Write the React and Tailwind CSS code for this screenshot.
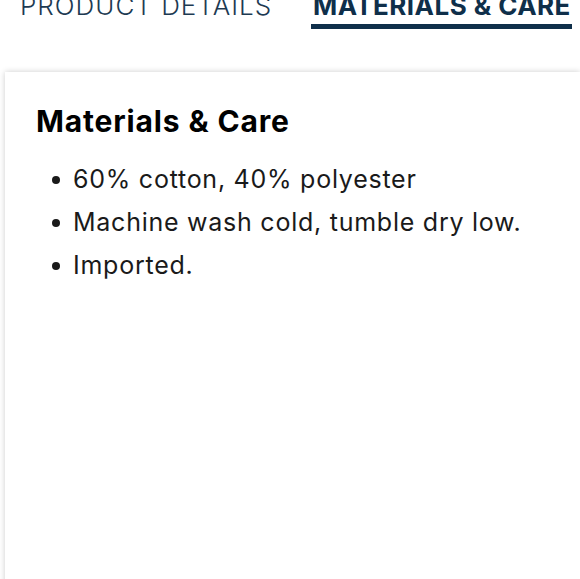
const items = ['60% cotton, 40% polyester', 'Machine wash cold, tumble dry low.', 'Imported.'];

export default function App() {
  return (
    <div className="h-[579px] w-[580px] overflow-hidden bg-white font-['Inter',sans-serif] text-[#1a1a1a]">
      <div className="-mt-[6px] flex items-start whitespace-nowrap pl-[20px]">
        <div className="text-[26px] font-light leading-[24px] tracking-[1px] text-[#1d3a52]">PRODUCT DETAILS</div>
        <div className="ml-[39px] flex w-[261px] flex-col">
          <div className="pl-[2px] text-[26px] font-bold leading-[24px] tracking-[0.45px] text-[#0f2f4a]">MATERIALS &amp; CARE</div>
          <div className="mt-[6px] h-[5px] bg-[#0f2f4a]" />
        </div>
      </div>
      <div className="ml-[5px] mt-[43px] h-[600px] bg-white pl-[31px] pt-[34px] shadow-[0_0_6px_rgba(0,0,0,0.2)]">
        <h2 className="text-[30px] font-bold leading-[30px] tracking-[0.85px] text-black">Materials &amp; Care</h2>
        <ul className="mt-[22px] flex flex-col">
          {items.map((t) => (
            <li key={t} className="flex items-center text-[25px] leading-[43px] tracking-[0.75px]">
              <span className="ml-[16px] mr-[13px] h-[8px] w-[8px] rounded-full bg-[#1a1a1a]" />
              {t}
            </li>
          ))}
        </ul>
      </div>
    </div>
  );
}
